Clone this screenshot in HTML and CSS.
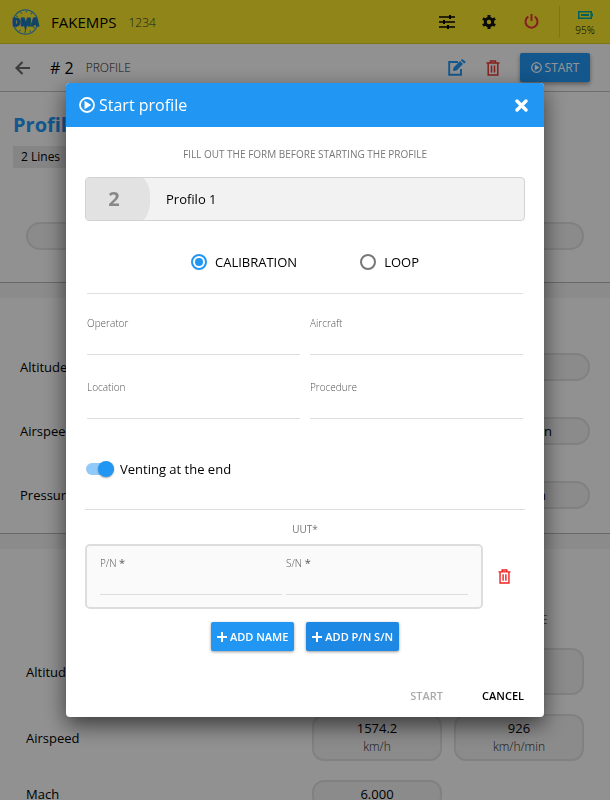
FILE: index.html
```html
<!DOCTYPE html>
<html lang="en">
<head>
<meta charset="utf-8">
<meta name="viewport" content="width=device-width, initial-scale=1">
<title>Start profile</title>
<link rel="stylesheet" href="styles.css">
</head>
<body>
<svg class="sprite" aria-hidden="true">
  <symbol id="trash" viewBox="0 0 14 16"><path d="M.5 3h13M4.500 3V1h5v2M2.200 3v12h9.600V3M5.500 5.500v7M8.500 5.500v7" fill="none" stroke="currentColor" stroke-width="1.500"/></symbol>
  <symbol id="play" viewBox="0 0 16 16"><circle cx="8" cy="8" r="7" fill="none" stroke="currentColor" stroke-width="1.800"/><path d="M5.500 3.800v8.400L12.300 8z" fill="currentColor"/></symbol>
  <symbol id="plus" viewBox="0 0 10 10"><path d="M5 0v10M0 5h10" stroke="currentColor" stroke-width="2"/></symbol>
</svg>
<div class="page">
  <header class="topbar">
    <svg class="logo" viewBox="0 0 30 28" role="img" aria-label="DMA">
      <circle cx="14.500" cy="14" r="12.200" fill="none" stroke="#3c93c0" stroke-width="1.300"/>
      <circle cx="14.500" cy="14" r="10.200" fill="none" stroke="#3c93c0" stroke-width="2" stroke-dasharray="1 4.340"/>
      <path d="M13 17h3l-1.500 8z" fill="#1976b9"/>
      <text class="logo-text" x="14.500" y="18" text-anchor="middle">DMA</text>
    </svg>
    <span class="device">FAKEMPS</span>
    <span class="serial">1234</span>
    <nav class="tools">
      <button aria-label="Options"><svg width="16" height="14" viewBox="0 0 16 14"><path d="M0 2h16M0 7h16M0 12h16" stroke="#000" stroke-width="1.700"/><path d="M11 0v4M5 5v4M9 10v4" stroke="#000" stroke-width="2"/></svg></button>
      <button aria-label="Settings"><svg width="14" height="14" viewBox="0 0 14 14"><circle cx="7" cy="7" r="3.700" fill="none" stroke="#111" stroke-width="3"/><g stroke="#111" stroke-width="3"><path d="M7 0v2.500M7 11.500V14M.9 3.500l2.200 1.250M10.900 9.250l2.200 1.250M.9 10.500l2.200-1.250M10.900 4.750l2.200-1.250"/></g></svg></button>
      <button aria-label="Power"><svg width="15" height="15" viewBox="0 0 15 15"><path d="M4.300 2.700a6 6 0 1 0 6.400 0M7.500 0v7" fill="none" stroke="#e5343f" stroke-width="2"/></svg></button>
    </nav>
    <div class="battery">
      <svg width="15" height="8" viewBox="0 0 15 8"><path d="M.750.750h12.500v6.500H.750z" fill="none" stroke="#00a5a0" stroke-width="1.500"/><path d="M3 3h8v2H3zM13 2.500h2v3h-2z" fill="#00a5a0"/></svg>
      <span>95%</span>
    </div>
  </header>
  <div class="subbar">
    <button class="back" aria-label="Back"><svg width="15" height="14" viewBox="0 0 15 14"><path d="M7.500 1L1.500 7l6 6M1.500 7H15" fill="none" stroke="#6c6c6c" stroke-width="2.200"/></svg></button>
    <span class="number"># 2</span>
    <span class="kind">PROFILE</span>
    <div class="actions">
      <button class="edit" aria-label="Edit"><svg width="18" height="17" viewBox="0 0 18 17"><path d="M10 3H1.200v12.800H13V10" fill="none" stroke="currentColor" stroke-width="1.900"/><path d="M5 12l.6-3.500L12 2.100l3 3L8.600 11.500zM12.800 1.300l1.300-1.300L18 3l-1.900 1.500z" fill="currentColor"/></svg></button>
      <button class="delete" aria-label="Delete"><svg width="14" height="16"><use href="#trash"/></svg></button>
      <button class="start"><svg width="11" height="11"><use href="#play"/></svg>START</button>
    </div>
  </div>
  <main>
    <section class="intro">
      <h1>Profilo 1</h1>
      <span class="chip">2 Lines</span>
      <div class="pill"></div>
    </section>
    <section class="limits">
      <div class="limit"><span>Altitude</span><span class="pill"></span></div>
      <div class="limit"><span>Airspeed</span><span class="pill">km/h/min</span></div>
      <div class="limit"><span>Pressure</span><span class="pill short">hPa/min</span></div>
    </section>
    <section class="lines">
      <div class="heads"><span></span><span>VERT RATE</span></div>
      <div class="line"><span>Altitude</span><div class="cell"></div><div class="cell"></div></div>
      <div class="line"><span>Airspeed</span><div class="cell">1574.2<small>km/h</small></div><div class="cell">926<small>km/h/min</small></div></div>
      <div class="line"><span>Mach</span><div class="cell single">6.000</div></div>
    </section>
  </main>
</div>
<div class="overlay">
  <form class="dialog" role="dialog" aria-labelledby="title">
    <div class="title-row">
      <svg width="16" height="16"><use href="#play"/></svg>
      <h2 id="title">Start profile</h2>
      <button type="button" class="close" aria-label="Close"><svg width="13" height="13" viewBox="0 0 13 13"><path d="M2 2l9 9M11 2l-9 9" stroke="#fff" stroke-width="3.400" stroke-linecap="round"/></svg></button>
    </div>
    <div class="body">
      <p class="hint">FILL OUT THE FORM BEFORE STARTING THE PROFILE</p>
      <div class="profile"><span class="badge">2</span><span>Profilo 1</span></div>
      <div class="modes">
        <label><input type="radio" name="mode" checked>CALIBRATION</label>
        <label><input type="radio" name="mode">LOOP</label>
      </div>
      <div class="fields">
        <label>Operator<input type="text"></label>
        <label>Aircraft<input type="text"></label>
        <label>Location<input type="text"></label>
        <label>Procedure<input type="text"></label>
      </div>
      <label class="vent"><input type="checkbox" checked>Venting at the end</label>
      <p class="uut">UUT*</p>
      <div class="unit">
        <div class="unit-box">
          <label><span>P/N <b>*</b></span><input type="text"></label>
          <label><span>S/N <b>*</b></span><input type="text"></label>
        </div>
        <button type="button" class="remove" aria-label="Remove unit"><svg width="13" height="15"><use href="#trash"/></svg></button>
      </div>
      <div class="adds">
        <button type="button"><svg width="10" height="10"><use href="#plus"/></svg>ADD NAME</button>
        <button type="button" class="deep"><svg width="10" height="10"><use href="#plus"/></svg>ADD P/N S/N</button>
      </div>
      <div class="footer">
        <button type="submit" disabled>START</button>
        <button type="button">CANCEL</button>
      </div>
    </div>
  </form>
</div>
</body>
</html>
```
FILE: styles.css
```css
* { box-sizing: border-box; }
body {
  margin: 0;
  font: 500 13px/18px "Open Sans", "Noto Sans", sans-serif;
  color: #000;
  background: #fafafa;
}
button {
  display: flex;
  align-items: center;
  justify-content: center;
  padding: 0;
  border: 0;
  background: none;
  font: inherit;
  color: inherit;
}
svg { display: block; flex: none; }
.sprite { position: absolute; width: 0; height: 0; }
.page { height: 100vh; overflow: hidden; }

.topbar {
  display: flex;
  align-items: center;
  height: 44px;
  padding-left: 11px;
  background: #f8e62c;
  border-bottom: 1px solid #d8c820;
}
.logo { width: 30px; height: 28px; }
.logo-text { font: 800 11px "Open Sans", sans-serif; fill: #1976b9; stroke: #1976b9; stroke-width: 1px; }
.device { margin-left: 10px; font-size: 15px; }
.serial { margin-left: 12px; padding-top: 2px; font-size: 12px; font-weight: 300; color: #333; }
.tools { display: flex; gap: 26px; margin-left: auto; }
.tools button { width: 16px; height: 16px; }
.battery {
  display: flex;
  flex-direction: column;
  align-items: center;
  gap: 2px;
  width: 51px;
  height: 32px;
  margin-left: 20px;
  padding-top: 5px;
  border-left: 1px solid #dccb28;
  font-size: 10px;
  font-weight: 300;
}

.subbar {
  display: flex;
  align-items: center;
  height: 48px;
  padding: 0 20px 0 15px;
  border-bottom: 1px solid #bebebe;
}
.number { margin-left: 20px; font-size: 16px; }
.kind { margin-left: 12px; font-size: 12px; font-weight: 300; color: #222; }
.actions { display: flex; align-items: center; gap: 20px; margin-left: auto; }
.edit { color: #2196f3; }
.delete { color: #e53935; }
.start {
  gap: 3px;
  width: 70px;
  height: 29px;
  border-radius: 2px;
  background: #2196f3;
  box-shadow: 0 2px 4px #0006;
  color: #fff;
  font-size: 12px;
  font-weight: 500;
}

.intro { height: 191px; padding: 19px 26px 0 13px; border-bottom: 1px solid #b5b5b5; }
h1 { margin: 0 0 8px; font-size: 20px; line-height: 27px; font-weight: 700; color: #2196f3; }
.chip { display: inline-block; padding: 2px 8px; background: #e6e6e6; font-size: 12px; }
.pill {
  display: flex;
  align-items: center;
  justify-content: flex-end;
  height: 28px;
  padding-right: 36px;
  border: 2px solid #dedede;
  border-radius: 14px;
  background: #f0f0f0;
}
.pill.short { padding-right: 42px; }
.intro .pill { margin: 54px 0 0 13px; }
.limits {
  display: flex;
  flex-direction: column;
  gap: 36px;
  height: 251px;
  padding: 55px 20px 0;
  border-top: 15px solid #f0f0f0;
  border-bottom: 1px solid #b5b5b5;
}
.limit { display: grid; grid-template-columns: 1fr 130px; align-items: center; }
.lines { padding: 62px 26px 0; border-top: 15px solid #f0f0f0; }
.heads, .line { display: grid; grid-template-columns: 1fr 130px 130px; column-gap: 12px; align-items: center; }
.heads { height: 37px; font-size: 12px; font-weight: 300; text-align: center; align-items: start; }
.heads span:first-child { grid-column: 2; }
.line { margin-bottom: 19px; }
.cell {
  height: 47px;
  padding-top: 3px;
  border: 2px solid #dedede;
  border-radius: 12px;
  background: #f0f0f0;
  text-align: center;
}
.cell.single { height: 28px; }
.cell small { display: block; font-size: 12px; line-height: 20px; font-weight: 300; color: #222; }

.overlay {
  position: fixed;
  inset: 0;
  display: flex;
  align-items: center;
  justify-content: center;
  padding: 0 66px;
  background: rgba(0, 0, 0, .42);
}
.dialog {
  width: 100%;
  max-width: 720px;
  border-radius: 4px;
  overflow: hidden;
  background: #fff;
  box-shadow: 0 8px 22px rgba(0, 0, 0, .6);
}
.title-row {
  display: flex;
  align-items: center;
  gap: 4px;
  height: 44px;
  padding: 0 16px 0 13px;
  background: #2196f3;
  color: #fff;
}
h2 { margin: 0; font-size: 16px; font-weight: 400; }
.close { margin-left: auto; }
.body { padding: 18px 19px 11px; }
p { margin: 0; text-align: center; }
.hint { font-size: 10px; font-weight: 400; color: #777; }
.profile {
  display: flex;
  align-items: center;
  gap: 16px;
  height: 44px;
  margin-top: 14px;
  overflow: hidden;
  border: 1px solid #d2d2d2;
  border-radius: 4px;
  background: #f2f2f2;
}
.badge {
  display: grid;
  place-items: center;
  width: 64px;
  height: 60px;
  padding-right: 8px;
  border-radius: 0 26px 26px 0;
  background: #e2e2e2;
  font-size: 20px;
  font-weight: 700;
  color: #888;
}
.modes {
  display: flex;
  justify-content: center;
  gap: 63px;
  margin: 0 2px;
  padding: 32px 0 22px;
  border-bottom: 1px solid #e0e0e0;
}
.modes label { display: flex; align-items: center; gap: 8px; }
.modes input {
  appearance: none;
  display: grid;
  place-items: center;
  width: 16px;
  height: 16px;
  margin: 0;
  border: 2px solid #777;
  border-radius: 50%;
}
.modes input:checked { border-color: #2196f3; }
.modes input:checked::before { content: ""; width: 8px; height: 8px; border-radius: 50%; background: #2196f3; }
.fields { display: grid; grid-template-columns: 1fr 1fr; gap: 23px 10px; padding: 20px 2px 0; }
.fields label, .unit-box label { display: block; font-size: 10px; font-weight: 300; color: #555; }
input[type="text"] {
  display: block;
  width: 100%;
  height: 23px;
  padding: 0;
  border: 0;
  border-bottom: 1px solid #ddd;
  background: none;
  font: inherit;
  color: #000;
}
.vent {
  display: flex;
  align-items: center;
  gap: 6px;
  margin-top: 41px;
  padding-bottom: 31px;
  border-bottom: 1px solid #ddd;
  font-weight: 400;
}
.vent input {
  appearance: none;
  display: flex;
  align-items: center;
  justify-content: flex-end;
  width: 28px;
  height: 12px;
  margin: 0 0 0 1px;
  border-radius: 6px;
  background: #90caf9;
}
.vent input::before { content: ""; width: 16px; height: 16px; border-radius: 50%; background: #2196f3; box-shadow: 0 1px 2px #0005; }
.uut { margin-top: 10px; font-size: 10px; font-weight: 400; color: #777; }
.unit { display: flex; align-items: center; margin-top: 6px; }
.unit-box {
  flex: 1;
  display: grid;
  grid-template-columns: 1fr 1fr;
  gap: 4px;
  height: 65px;
  padding: 8px 13px;
  border: 2px solid #ddd;
  border-radius: 5px;
  background: #fafafa;
}
.unit-box b { font-size: 11px; font-weight: 400; }
.remove { width: 42px; height: 30px; color: #f02020; }
.adds { display: flex; justify-content: center; gap: 12px; margin-top: 13px; }
.adds button {
  gap: 3px;
  height: 29px;
  padding: 0 6px;
  border-radius: 2px;
  background: #2196f3;
  box-shadow: 0 1px 3px #0006;
  color: #fff;
  font-size: 11px;
  font-weight: 600;
}
.adds .deep { background: #1e88e5; }
.footer { display: flex; justify-content: flex-end; gap: 39px; margin-top: 35px; padding-right: 1px; font-size: 11px; font-weight: 600; }
.footer button { height: 20px; }
.footer button:disabled { color: #aaa; }
```
